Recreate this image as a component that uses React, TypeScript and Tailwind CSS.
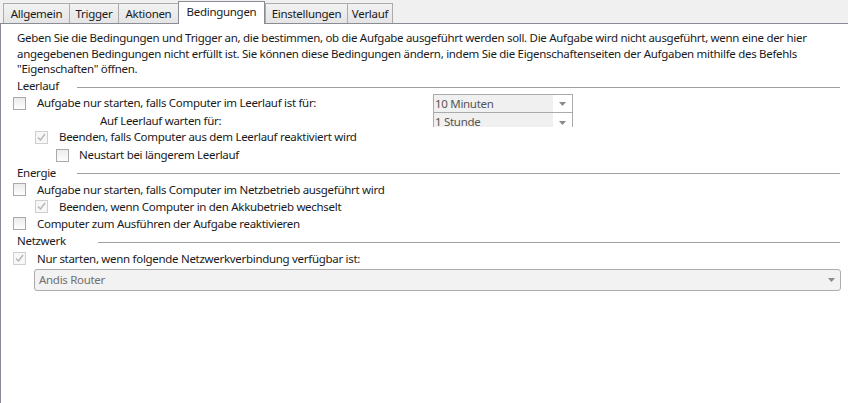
import React from "react";

const tabs = [
  { label: "Allgemein", w: "w-[66px]" },
  { label: "Trigger", w: "w-[49px]" },
  { label: "Aktionen", w: "w-[60px]" },
  { label: "Bedingungen", w: "w-[87px]", active: true },
  { label: "Einstellungen", w: "w-[82px]" },
  { label: "Verlauf", w: "w-[46px]" },
];

function Tick() {
  return (
    <svg width="11" height="11" viewBox="0 0 11 11" className="block">
      <path d="M2 5.5 L4.5 8 L9 2" fill="none" stroke="#b4b4b4" strokeWidth="1.4" />
    </svg>
  );
}

function Box({ checked }: { checked?: boolean }) {
  return (
    <div
      className={
        "w-[13px] h-[13px] shrink-0 border flex items-center justify-center " +
        (checked
          ? "border-[#cfcfcf] bg-[#f7f7f7]"
          : "border-[#a9a9a9] bg-gradient-to-b from-[#ececec] to-[#fdfdfd]")
      }
    >
      {checked && <Tick />}
    </div>
  );
}

function Arrow() {
  return (
    <svg width="7" height="4" viewBox="0 0 7 4" className="block">
      <path d="M0 0 L7 0 L3.5 4 Z" fill="#8a8a8a" />
    </svg>
  );
}

function Row({
  box,
  text,
  h,
  checked,
  gap = "gap-[11px]",
  children,
}: {
  box: string;
  text: string;
  h: string;
  checked?: boolean;
  gap?: string;
  children?: React.ReactNode;
}) {
  return (
    <div className={"flex items-center " + h}>
      <div className={"flex items-center " + box + " " + gap}>
        <Box checked={checked} />
        <span className="whitespace-nowrap">{text}</span>
      </div>
      {children}
    </div>
  );
}

function Group({ label, w, h }: { label: string; w: string; h: string }) {
  return (
    <div className={"flex items-center pl-[16px] pr-[8px] " + h}>
      <span className={"whitespace-nowrap " + w}>{label}</span>
      <div className="flex-1 h-px mt-[2px] bg-[#a0a0a0]" />
    </div>
  );
}

function SmallCombo({ value }: { value: string }) {
  return (
    <div className="w-[140px] h-[19px] border border-[#ababab] flex items-stretch bg-white">
      <div className="w-[119px] bg-[#f0f0f0] text-[#555] pl-[1px] leading-[17px] whitespace-nowrap">
        {value}
      </div>
      <div className="flex-1 flex items-center justify-center pt-[2px]">
        <Arrow />
      </div>
    </div>
  );
}

export default function App() {
  return (
    <div
      className="w-[848px] h-[403px] overflow-hidden bg-white text-[11.5px] text-[#1a1a1a] flex flex-col tracking-[-0.3px]"
      style={{ fontFamily: '"Noto Sans", "Open Sans", sans-serif' }}
    >
      <div className="h-[23px] bg-[#f0f0f0] flex items-end pl-[3px] relative z-10">
        {tabs.map((t) =>
          t.active ? (
            <div
              key={t.label}
              className={
                t.w +
                " h-[23px] bg-white border border-b-0 border-[#898c95] -mb-px text-center leading-[20px]"
              }
            >
              {t.label}
            </div>
          ) : (
            <div
              key={t.label}
              className={
                t.w +
                " h-[20px] bg-gradient-to-b from-[#f2f2f2] to-[#e5e5e5] border border-b-0 border-r-0 border-[#acacac] last:border-r text-center leading-[19px]"
              }
            >
              {t.label}
            </div>
          )
        )}
      </div>

      <div className="flex-1 border-t border-l border-[#898c95] flex flex-col">
        <div className="pt-[6px] pl-[16px] whitespace-nowrap">
          <div className="h-[16px] leading-[16px]">
            Geben Sie die Bedingungen und Trigger an, die bestimmen, ob die Aufgabe ausgeführt werden soll. Die Aufgabe wird nicht ausgeführt, wenn eine der hier
          </div>
          <div className="h-[15px] leading-[15px]">
            angegebenen Bedingungen nicht erfüllt ist. Sie können diese Bedingungen ändern, indem Sie die Eigenschaftenseiten der Aufgaben mithilfe des Befehls
          </div>
          <div className="h-[15px] leading-[15px]">"Eigenschaften" öffnen.</div>
        </div>

        <div className="h-[2px]" />
        <Group label="Leerlauf" w="w-[60px]" h="h-[16px]" />

        <Row box="ml-[12px] w-[420px]" text="Aufgabe nur starten, falls Computer im Leerlauf ist für:" h="h-[18px]">
          <SmallCombo value="10 Minuten" />
        </Row>

        <div className="flex items-start h-[16px]">
          <div className="w-[432px] shrink-0 pl-[99px] leading-[16px] pt-[1px] whitespace-nowrap">
            Auf Leerlauf warten für:
          </div>
          <div className="h-[15px] overflow-hidden">
            <SmallCombo value="1 Stunde" />
          </div>
        </div>

        <Row box="ml-[34px]" text="Beenden, falls Computer aus dem Leerlauf reaktiviert wird" h="h-[18px]" checked />
        <Row box="ml-[55px]" gap="gap-[10px]" text="Neustart bei längerem Leerlauf" h="h-[18px]" />

        <Group label="Energie" w="w-[60px]" h="h-[17px]" />
        <Row box="ml-[12px]" text="Aufgabe nur starten, falls Computer im Netzbetrieb ausgeführt wird" h="h-[17px]" />
        <Row box="ml-[34px]" text="Beenden, wenn Computer in den Akkubetrieb wechselt" h="h-[17px]" checked />
        <Row box="ml-[12px]" text="Computer zum Ausführen der Aufgabe reaktivieren" h="h-[17px]" />

        <Group label="Netzwerk" w="w-[81px]" h="h-[18px]" />
        <Row box="ml-[12px]" text="Nur starten, wenn folgende Netzwerkverbindung verfügbar ist:" h="h-[17px]" checked />

        <div className="mt-[2px] ml-[33px] w-[807px] h-[22px] rounded-[3px] border border-[#acacac] bg-[#f2f2f2] flex items-center justify-between pl-[4px] pr-[5px]">
          <span className="text-[#707070]">Andis Router</span>
          <Arrow />
        </div>
      </div>
    </div>
  );
}
